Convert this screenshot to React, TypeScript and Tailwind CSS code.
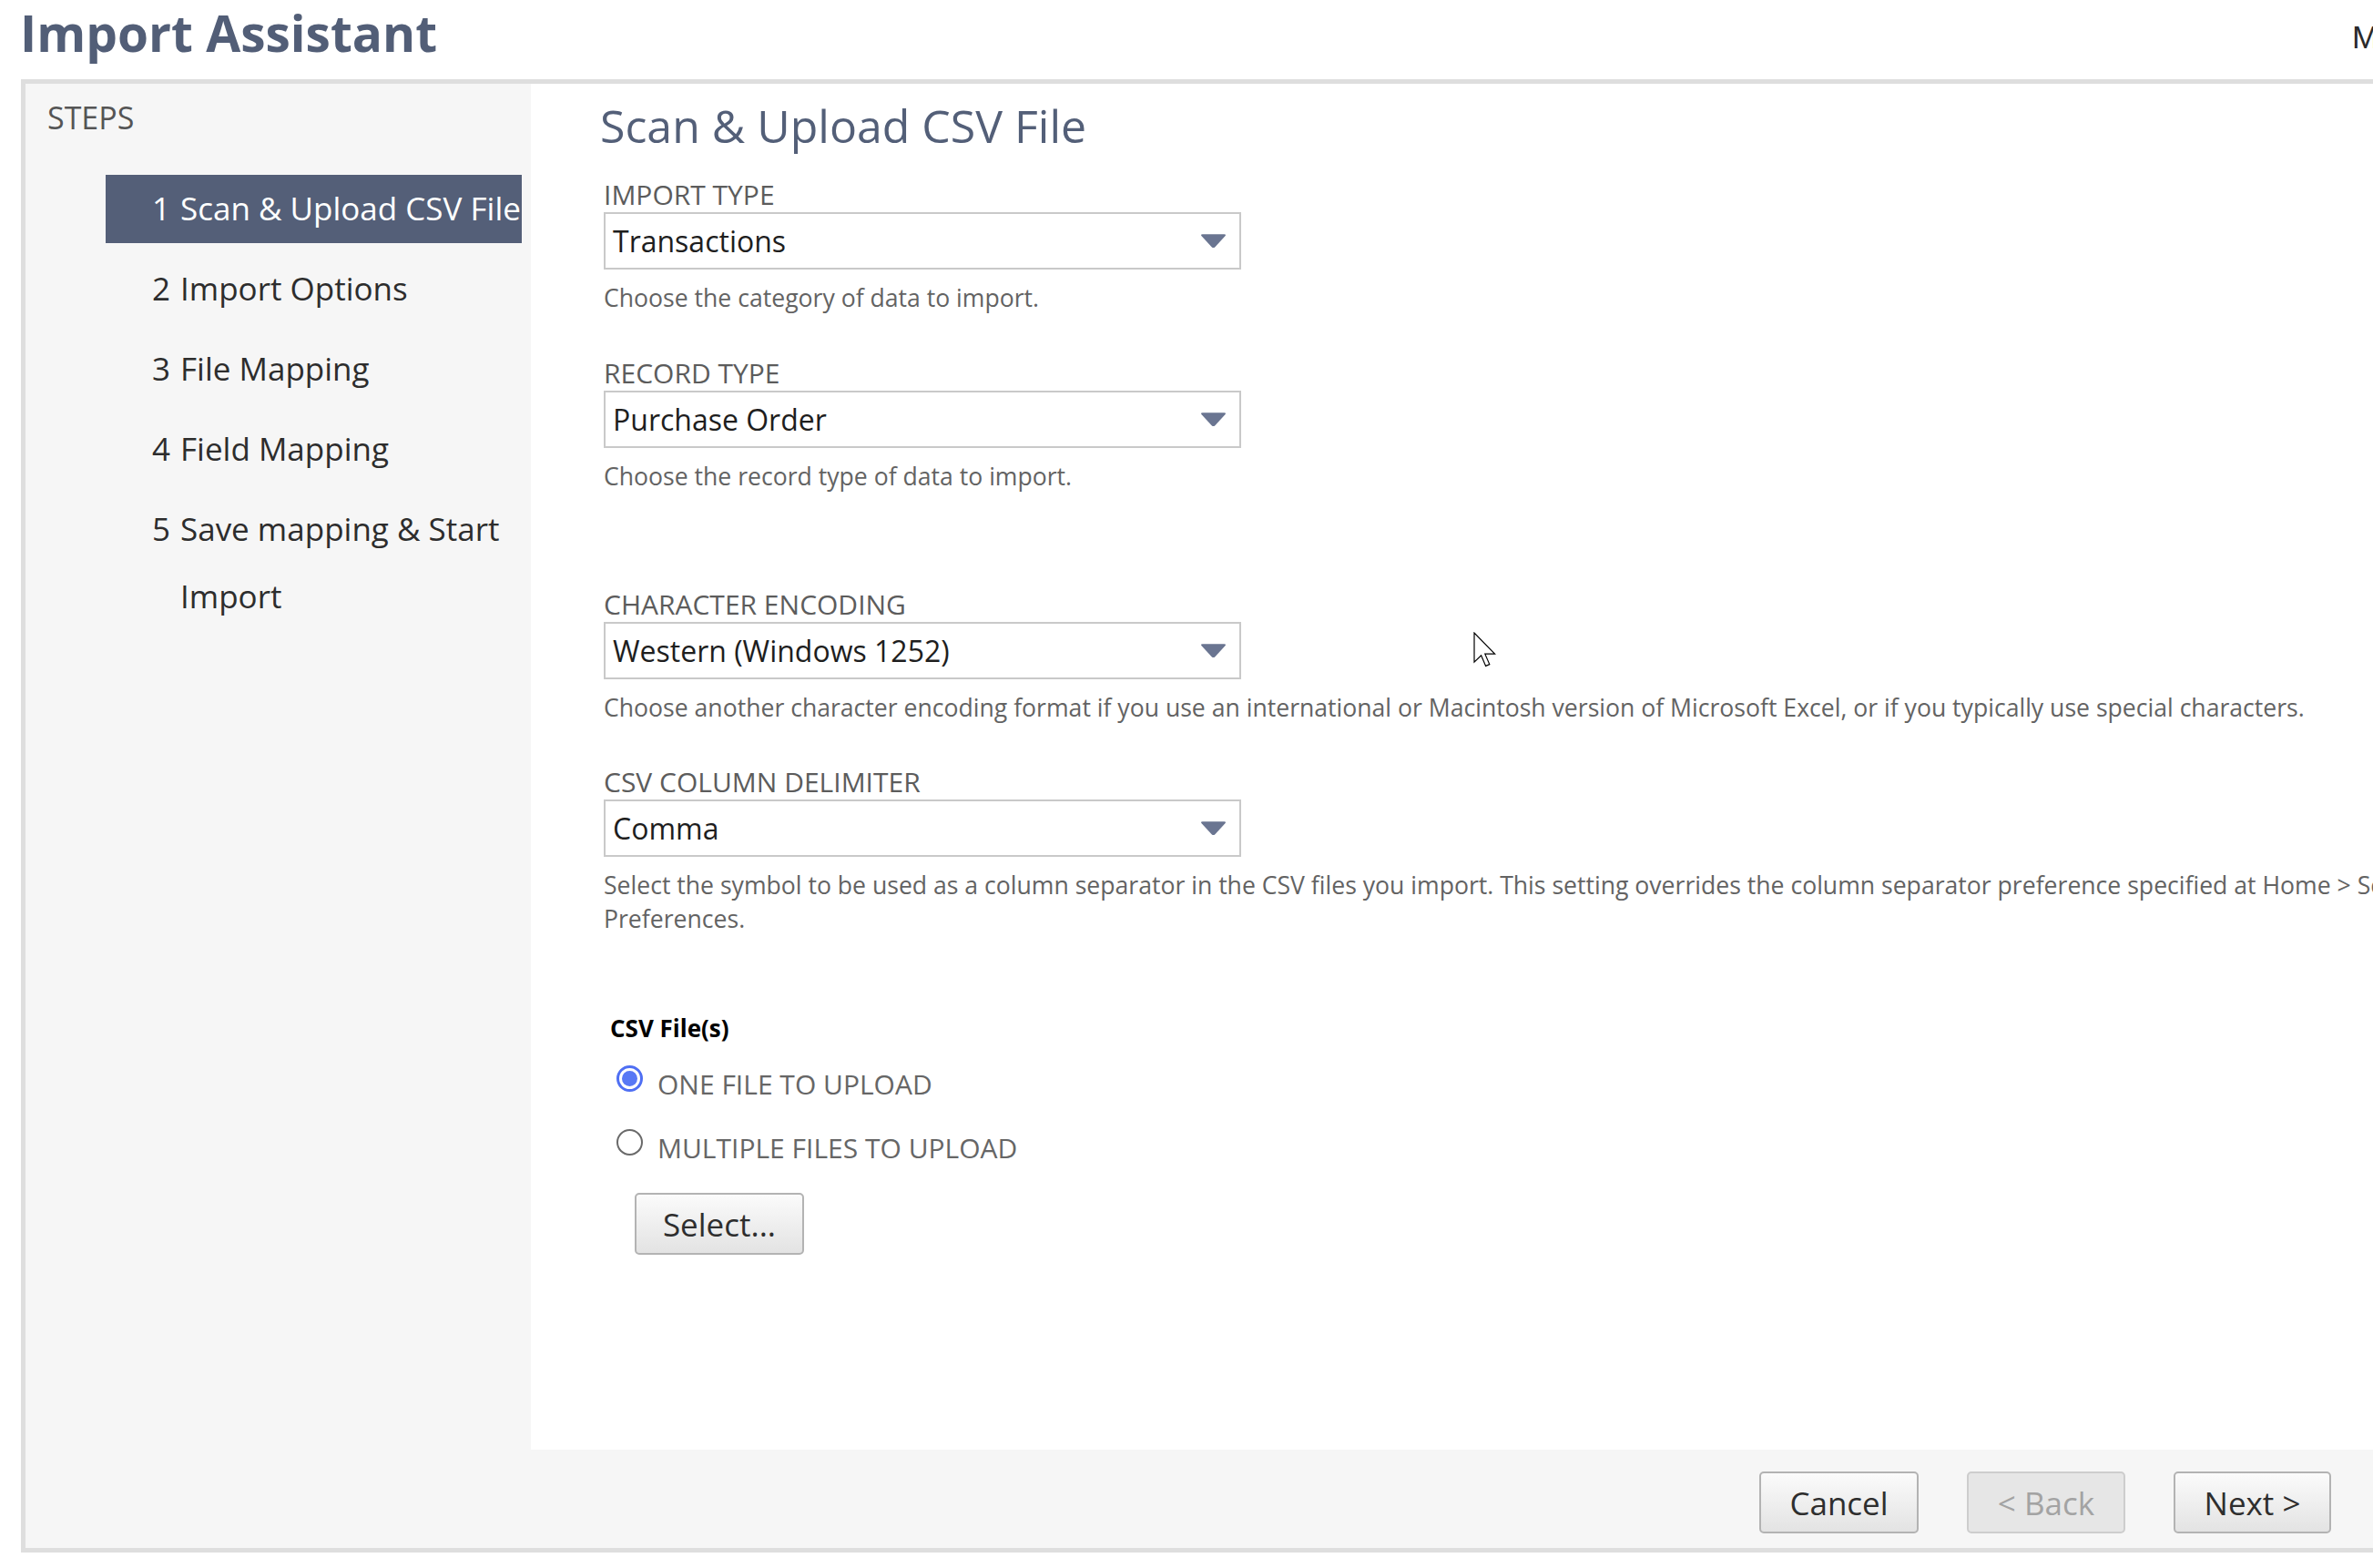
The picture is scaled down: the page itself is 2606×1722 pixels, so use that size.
import React from 'react';

const steps = [
  { n: 1, label: 'Scan & Upload CSV File', active: true },
  { n: 2, label: 'Import Options' },
  { n: 3, label: 'File Mapping' },
  { n: 4, label: 'Field Mapping' },
  { n: 5, label: 'Save mapping & Start Import' },
];

// Rounded down-triangle used by the NetSuite style dropdowns
const Caret = () => (
  <svg width="29" height="17" viewBox="0 0 29 17" className="shrink-0">
    <path
      d="M2.6 1.2 H26.4 Q29 1.2 27.4 3.2 L16.4 15.2 Q14.5 17 12.6 15.2 L1.6 3.2 Q0 1.2 2.6 1.2Z"
      fill="#6a7591"
    />
  </svg>
);

const SelectField = ({
  label,
  value,
  help,
  className = '',
}: {
  label: string;
  value: string;
  help: React.ReactNode;
  className?: string;
}) => (
  <div className={className}>
    <div className="text-[30px] leading-[38px] text-[#5c5c5c]">{label}</div>
    <div className="w-[700px] h-[63px] border-2 border-[#c9c9c9] bg-white flex items-center justify-between pl-[8px] pr-[14px]">
      <span className="text-[32px] text-[#1e1e1e]">{value}</span>
      <Caret />
    </div>
    <div className="mt-[13px] text-[26.6px] leading-[37px] text-[#636363]">{help}</div>
  </div>
);

const Radio = ({ checked, label, className = '' }: { checked?: boolean; label: string; className?: string }) => (
  <div className={`flex items-start ml-[14px] ${className}`}>
    {checked ? (
      <div className="w-[29px] h-[29px] rounded-full border-[3px] border-[#4f6ff3] bg-white flex items-center justify-center shrink-0">
        <div className="w-[17px] h-[17px] rounded-full bg-[#5878f5]" />
      </div>
    ) : (
      <div className="w-[29px] h-[29px] rounded-full border-2 border-[#6a6a6a] bg-white shrink-0" />
    )}
    <span className="ml-[16px] mt-[2px] text-[30px] leading-[38px] text-[#666666]">{label}</span>
  </div>
);

const Button = ({ children, disabled, className = '' }: { children: React.ReactNode; disabled?: boolean; className?: string }) => (
  <button
    className={`h-[68px] rounded-[5px] border-2 text-[35px] leading-none ${
      disabled
        ? 'border-[#cdcdcd] bg-[#e6e6e6] text-[#a3a3a3]'
        : 'border-[#b3b3b3] bg-linear-to-b from-[#fbfbfb] to-[#e3e3e3] text-[#2e2e2e]'
    } ${className}`}
  >
    {children}
  </button>
);

export default function App() {
  return (
    <div className="relative w-screen h-screen overflow-hidden bg-white font-['Open_Sans',sans-serif]">
      <div className="w-[2740px]">
        {/* Page header */}
        <div className="h-[87px] flex items-start">
          <h1 className="ml-[22px] mt-[1px] text-[55px] leading-[70px] font-bold text-[#525e77]">Import Assistant</h1>
          <div className="ml-auto w-[157px] pt-[21px] text-[35px] leading-[40px] text-[#2a2a2a] font-['Liberation_Sans',Arial,sans-serif]">
            M
          </div>
        </div>

        {/* Wizard box */}
        <div className="ml-[23px] w-[2700px] h-[1618px] border-[5px] border-[#dedede] bg-[#f6f6f6] flex">
          {/* Steps sidebar */}
          <div className="w-[555px] shrink-0 pt-[17px]">
            <div className="pl-[24px] text-[34px] leading-[40px] text-[#555555]">STEPS</div>
            <div className="mt-[43px] ml-[88px] mr-[10px] flex flex-col gap-[13px]">
              {steps.map((s) => (
                <div
                  key={s.n}
                  className={`flex pl-[51px] text-[35px] leading-[74px] pb-[1px] overflow-hidden ${
                    s.active ? 'bg-[#545f78] text-white' : 'text-[#2d2d2d]'
                  }`}
                >
                  <span className="w-[31px] shrink-0">{s.n}</span>
                  <span className={s.active ? 'whitespace-nowrap' : ''}>{s.label}</span>
                </div>
              ))}
            </div>
          </div>

          {/* Main column */}
          <div className="flex-1 flex flex-col">
            <div className="h-[1500px] bg-white pl-[80px] pr-[20px] pt-[16px]">
              <h2 className="-ml-[4px] text-[50px] leading-[60px] text-[#535f78]">Scan &amp; Upload CSV File</h2>

              <SelectField
                className="mt-[27px]"
                label="IMPORT TYPE"
                value="Transactions"
                help="Choose the category of data to import."
              />
              <SelectField
                className="mt-[45px]"
                label="RECORD TYPE"
                value="Purchase Order"
                help="Choose the record type of data to import."
              />
              <SelectField
                className="mt-[103px]"
                label="CHARACTER ENCODING"
                value="Western (Windows 1252)"
                help="Choose another character encoding format if you use an international or Macintosh version of Microsoft Excel, or if you typically use special characters."
              />
              <SelectField
                className="mt-[44px]"
                label="CSV COLUMN DELIMITER"
                value="Comma"
                help="Select the symbol to be used as a column separator in the CSV files you import. This setting overrides the column separator preference specified at Home > Set Preferences."
              />

              <div className="mt-[83px] ml-[7px] text-[26px] leading-[36px] font-bold text-black">CSV File(s)</div>
              <Radio className="mt-[23px]" checked label="ONE FILE TO UPLOAD" />
              <Radio className="mt-[30px]" label="MULTIPLE FILES TO UPLOAD" />
              <Button className="mt-[30px] ml-[34px] w-[186px]">Select...</Button>
            </div>

            {/* Footer buttons */}
            <div className="flex-1 flex items-center justify-end pt-[8px] pr-[158px] gap-[53px]">
              <Button className="w-[175px]">Cancel</Button>
              <Button disabled className="w-[174px]">&lt; Back</Button>
              <Button className="w-[173px]">Next &gt;</Button>
            </div>
          </div>
        </div>
      </div>

      {/* Mouse pointer */}
      <svg className="absolute left-[1618px] top-[694px]" width="25" height="39" viewBox="0 0 12.5 19.5">
        <path
          d="M0.5 0.5 L0.5 16.6 L4.3 12.9 L6.8 18.7 L8.9 17.8 L6.4 12.1 L11.8 12.1 Z"
          fill="white"
          stroke="black"
          strokeWidth="0.6"
          strokeLinejoin="miter"
        />
      </svg>
    </div>
  );
}
